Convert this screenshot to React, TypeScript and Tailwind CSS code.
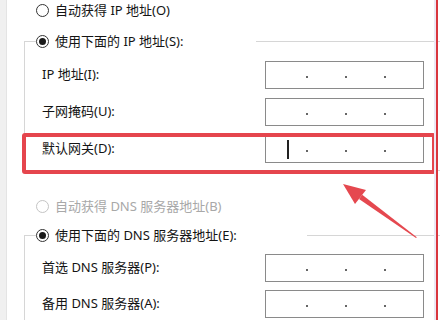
import React from "react";

const FONT = { fontFamily: '"Noto Sans", "Noto Sans CJK SC", sans-serif' };

function Radio({ checked, disabled, label }: { checked?: boolean; disabled?: boolean; label: string }) {
  return (
    <span className="flex items-center gap-[6px] h-[20px]">
      <span
        className={
          "flex items-center justify-center w-[13px] h-[13px] rounded-full border bg-white " +
          (disabled ? "border-[#c4c4c4]" : "border-[#333333]")
        }
      >
        {checked && <span className="w-[7px] h-[7px] rounded-full bg-[#1a1a1a]" />}
      </span>
      <span className={"text-[13px] leading-[20px] whitespace-nowrap " + (disabled ? "text-[#a8a8a8]" : "text-[#141414]")}>
        {label}
      </span>
    </span>
  );
}

function IpField({ cursor }: { cursor?: boolean }) {
  return (
    <div className={"flex items-center w-[159px] h-[28px] border border-[#8a8a8a] bg-white " + (cursor ? "pl-[21px]" : "pl-[40px]")}>
      {cursor && <span className="w-[2px] h-[19px] bg-[#222] mr-[17px]" />}
      <div className="flex items-center gap-[37px] translate-y-[2px]">
        <span className="w-[2px] h-[2px] rounded-full bg-[#333]" />
        <span className="w-[2px] h-[2px] rounded-full bg-[#333]" />
        <span className="w-[2px] h-[2px] rounded-full bg-[#333]" />
      </div>
    </div>
  );
}

function Row({ label, cursor }: { label: string; cursor?: boolean }) {
  return (
    <div className="flex items-center justify-between pl-[6px] h-[28px]">
      <span className="text-[13px] text-[#141414] whitespace-nowrap">{label}</span>
      <IpField cursor={cursor} />
    </div>
  );
}

export default function App() {
  return (
    <div className="relative w-[440px] h-[320px] overflow-hidden bg-white flex" style={FONT}>
      <div className="w-[7px] h-full bg-[#f0f0f0] border-r border-[#e4e4e4] shrink-0" />
      <div className="flex-1 flex flex-col">
        <div className="h-[24px] flex items-center pl-[29px]">
          <Radio label="自动获得 IP 地址(O)" />
        </div>
        <fieldset className="mt-[11px] ml-[17px] border-l border-t border-b border-[#d6d6d6] pl-[11px] pr-[16px] pt-[10px] pb-[7px] flex flex-col gap-[9px]">
          <legend className="w-[220px] h-[20px] bg-white">
            <Radio checked label="使用下面的 IP 地址(S):" />
          </legend>
          <Row label="IP 地址(I):" />
          <Row label="子网掩码(U):" />
          <Row label="默认网关(D):" cursor />
        </fieldset>
        <div className="mt-[25px] h-[24px] flex items-center pl-[29px]">
          <Radio disabled label="自动获得 DNS 服务器地址(B)" />
        </div>
        <fieldset className="mt-[9px] ml-[17px] border-l border-t border-b border-[#d6d6d6] pl-[11px] pr-[16px] pt-[9px] pb-[7px] flex flex-col gap-[8px]">
          <legend className="w-[271px] h-[20px] bg-white">
            <Radio checked label="使用下面的 DNS 服务器地址(E):" />
          </legend>
          <Row label="首选 DNS 服务器(P):" />
          <Row label="备用 DNS 服务器(A):" />
        </fieldset>
      </div>

      {/* annotation overlays */}
      <div className="absolute left-[22px] top-[133px] w-[414px] h-[41px] border-[4px] border-[#e5454d] rounded-[3px]" />
      <div className="absolute left-[434px] top-0 w-[2px] h-full bg-[#ece8f4]" />
      <div className="absolute left-[436px] top-0 w-[2px] h-full bg-[#d9363e]" />
      <svg className="absolute left-0 top-0" width="440" height="320" viewBox="0 0 440 320">
        <polygon points="343,184 366,190 355,204" fill="#e5484f" />
        <polygon points="359,199 362.2,194.8 416.8,237.2 416,237.9" fill="#e5484f" />
      </svg>
    </div>
  );
}
